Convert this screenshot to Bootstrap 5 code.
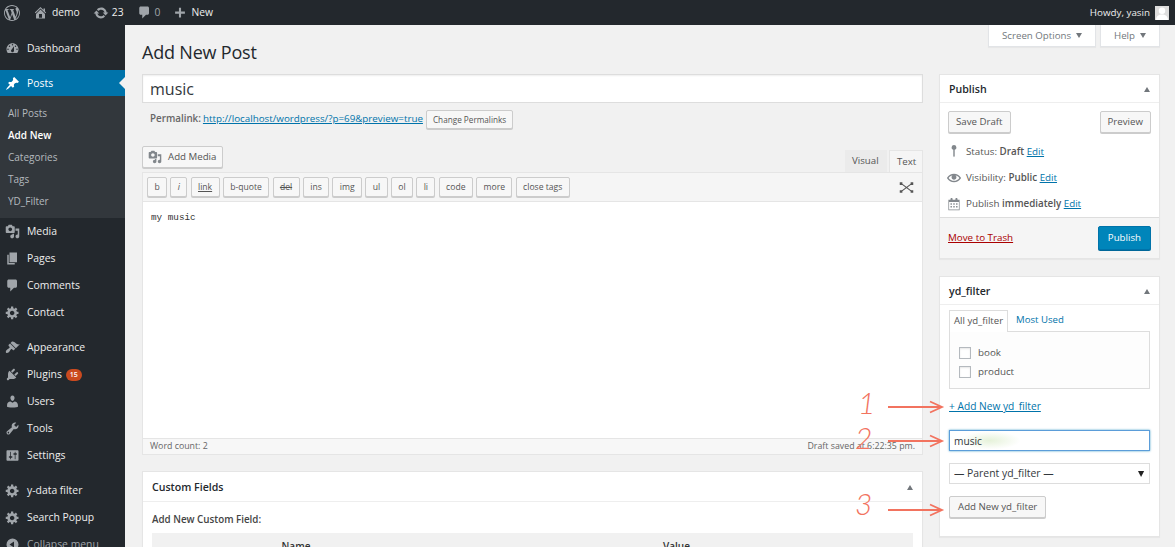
<!DOCTYPE html>
<html lang="en">
<head>
<meta charset="utf-8">
<title>Add New Post</title>
<link rel="stylesheet" href="https://cdn.jsdelivr.net/npm/bootstrap@5.3.0/dist/css/bootstrap.min.css">
<style>
html,body{height:100%;overflow:hidden}
body{background:#f1f1f1;color:#444;font-family:"Open Sans","Noto Sans",sans-serif;font-size:10px;line-height:1.4}
.ic{fill:currentColor;display:block;flex:none}
.stage{height:547px;width:1175px;overflow:hidden}
.adminbar{height:25px;flex:none;background:#23282d;color:#eee;padding:0 6px 0 4px;font-size:10.3px}
.adminbar .ab-item{display:flex;align-items:center;gap:4px;margin-right:13px}
.adminbar .ab-tight{gap:3px}
.adminbar .ic{color:#a0a5aa}
.ab-zero{color:#a0a5aa}
.howdy{font-size:9.8px}
.avatar-box{width:14px;height:14px;background:#ddd;margin-left:5px;overflow:hidden}
.main-row{height:522px;min-height:0}
.side{width:125px;flex:none;background:#23282d;padding-top:10px;font-size:10.4px;height:522px}
.menu-row{height:27px;display:flex;align-items:center;color:#eee;padding-left:5px;gap:7px;text-decoration:none;position:relative}
.menu-row .ic{color:#a0a5aa}
.menu-row.active{background:#0073aa;color:#fff;height:26px}
.menu-row.active .ic{color:#fff}
.menu-row.active::after{content:"";position:absolute;right:0;top:7px;border:6px solid transparent;border-right-color:#f1f1f1;border-left:0}
.menu-gap{height:8px}
.submenu{background:#32373c;padding:6px 0;color:#b4b9be;font-size:10px}
.submenu div{height:22px;line-height:22px;padding-left:8px}
.submenu .on{color:#fff;font-weight:600}
.plug-badge{background:#ca4a1f;color:#fff;border-radius:8px;font-size:7px;font-weight:600;line-height:12px;height:12px;padding:0 4px;margin-left:-3px}
.collapse-row{color:#a0a5aa}
.content-area{padding:0 15px 0 17px;min-width:0}
.head-line{height:49px}
.page-title{font-size:18px;letter-spacing:-.2px;font-weight:400;color:#23282d;margin:15px 0 0;line-height:24px}
.screen-tab{height:22px;background:#fff;border:1px solid #e2e4e7;border-top:0;padding:0 13px;display:flex;align-items:center;gap:5px;color:#72777c;font-size:9.7px;box-shadow:0 1px 1px rgba(0,0,0,.04)}
.tri-down{width:0;height:0;border:3.5px solid transparent;border-top:5px solid #72777c;border-bottom:0}
.tri-up{width:0;height:0;border:3.5px solid transparent;border-bottom:5px solid #72777c;border-top:0}
.left-col{width:781px;flex:none}
.right-col{width:221px;flex:none}
.two-col{gap:16px}
.post-title{height:29px;border:1px solid #ddd;border-radius:0;padding:0 7px;font-size:16px;color:#32373c;box-shadow:inset 0 1px 2px rgba(0,0,0,.07)}
.perma{height:32px;padding-left:8px;font-size:9.8px;gap:2px;color:#666}
.perma a,.pub-link,.box-link{color:#0073aa}
.perma b{font-weight:600}
.wbtn{background:#f7f7f7;border:1px solid #ccc;box-shadow:0 1px 0 #ccc;border-radius:2px;color:#555;font-size:9.7px;padding:0 7px;height:22px;line-height:20px;white-space:nowrap;--bs-btn-hover-bg:#f7f7f7}
.wbtn-sm{font-size:8.2px;height:19px;line-height:17px;padding:0 6px;margin-left:1px}
.editor-top{height:26px;margin-top:11px}
.media-btn{display:flex;align-items:center;gap:6px;padding:0 6px 0 5px}
.media-btn .ic{color:#82878c}
.tab-pane-x{height:22px;line-height:22px;padding:0 7px;font-size:9.7px;color:#555}
.tab-visual{background:#ebebeb;width:42px;margin-right:2px}
.tab-text{background:#f5f5f5;border:1px solid #e5e5e5;border-bottom:0;width:34px}
.tabs-wrap{align-self:flex-end}
.toolbar{height:29px;background:#f5f5f5;border:1px solid #e5e5e5;border-bottom:0;padding:0 4px;gap:3.3px}
.qt{background:#f7f7f7;border:1px solid #ccc;box-shadow:0 1px 0 #ccc;border-radius:2px;color:#555;font-size:8.6px;height:20px;line-height:18px;padding:0 6.4px;white-space:nowrap}
.qt.ital{font-style:italic}
.qt.und{text-decoration:underline}
.qt.lin{text-decoration:line-through}
.dfw{color:#555}
.text-wrap{height:237px;background:#fff;border:1px solid #e5e5e5;border-bottom:0;padding:9px 8px;font-family:"Liberation Mono",monospace;font-size:9.3px;color:#333}
.statusbar{height:17px;background:#f7f7f7;border:1px solid #e5e5e5;padding:0 7px;font-size:8.8px;color:#666}
.wbox{background:#fff;border:1px solid #e5e5e5;border-radius:0;box-shadow:0 1px 1px rgba(0,0,0,.04);--bs-card-border-color:#e5e5e5}
.wbox-head{height:28px;flex:none;padding:1px 9px 0;border-bottom:1px solid #eee;font-size:10.6px;font-weight:600;color:#23282d}
.cf-box{margin-top:16px;height:90px}
.cf-head{height:30px}
.cf-label{font-size:9.8px;font-weight:600;color:#444;padding:10px 9px 0;height:34px;line-height:15px}
.cf-table{margin:0 9px;background:#f1f1f1;height:30px;display:flex;font-size:10px;font-weight:600;color:#333;padding-top:6px}
.cf-table div{text-align:center}
.cf-table .c1{width:288px}
.cf-table .c2{flex:1}
.pub-box{height:185px}
.pub-actions{padding:8px 8px 0;height:36px}
.pub-line{height:27px;padding-left:7px;gap:5px;font-size:9.8px;color:#555}
.pub-line .ic{color:#82878c}
.pub-line b{font-weight:600}
.pub-foot{height:41px;flex:none;background:#f5f5f5;border-top:1px solid #ddd;padding:0 8px;margin-top:auto}
.trash{color:#a00;font-size:9.8px}
.pub-btn{background:#0085ba;border:1px solid #0073aa;box-shadow:0 1px 0 #006799;color:#fff;border-radius:2px;font-size:9.7px;height:24px;line-height:22px;padding:0 9px;--bs-btn-hover-bg:#0085ba}
.yd-box{margin-top:17px;height:261px}
.yd-body{padding:5px 9px 0}
.yd-tabs{height:21px;font-size:9.6px;color:#555}
.yd-tab{padding:0 4px;height:22px;line-height:20px;background:#fff;border:1px solid #ddd;border-bottom:0;position:relative;z-index:1}
.yd-tab2{padding:0 8px;line-height:20px;color:#0073aa}
.yd-list{height:58px;border:1px solid #ddd;background:#fdfdfd;padding:12px 9px 0;font-size:9.8px;color:#555}
.yd-check{height:18.500px;gap:7px}
.cb{appearance:none;width:12px;height:12px;border:1px solid #b4b9be;background:#fff;box-shadow:inset 0 1px 2px rgba(0,0,0,.1);margin:0;flex:none}
.add-link{display:block;margin-top:10px;height:31px;font-size:10.2px;color:#0073aa;line-height:14px}
.yd-input{height:21px;border:1px solid #5b9dd9;border-radius:0;box-shadow:0 0 2px rgba(30,140,190,.8);padding:0 4px;font-size:10.2px;color:#32373c;background:radial-gradient(ellipse 34px 10px at 40px 50%,#e6f2da,#fff 90%)}
.yd-select{height:21px;border:1px solid #ddd;border-radius:0;padding:0 4px;margin-top:12px;font-size:10.4px;color:#32373c;background-image:url("data:image/svg+xml,%3Csvg xmlns='http://www.w3.org/2000/svg' width='8' height='6'%3E%3Cpath d='M0 0h7L3.5 6z' fill='%23222'/%3E%3C/svg%3E");background-position:right 4px center;background-size:7px 6px}
.yd-add{margin-top:12px;display:inline-block;padding:0 8px}
.annot{position:absolute;left:0;top:0;pointer-events:none}
.num{position:absolute;color:#f2735f;font-family:"Lato","Liberation Sans",sans-serif;font-style:italic;font-weight:300;font-size:30px;line-height:30px}
.n1{left:858px;top:387px}
.n2{left:855px;top:422px}
.n3{left:855px;top:488px}
.arrow-svg{position:absolute;left:880px;top:395px}
</style>
</head>
<body class="position-relative">
<svg width="0" height="0" class="position-absolute">
<defs>
<symbol id="i-wp" viewBox="0 0 20 20"><path d="M20 10c0-5.51-4.49-10-10-10C4.48 0 0 4.49 0 10c0 5.52 4.48 10 10 10 5.51 0 10-4.48 10-10zM7.78 15.37L4.37 6.22c.55-.02 1.17-.08 1.17-.08.5-.06.44-1.13-.06-1.11 0 0-1.45.11-2.37.11-.18 0-.37 0-.58-.01C4.12 2.69 6.87 1.11 10 1.11c2.33 0 4.45.87 6.05 2.34-.68-.11-1.65.39-1.65 1.58 0 .74.45 1.36.9 2.1.35.61.55 1.36.55 2.46 0 1.49-1.4 5-1.4 5l-3.03-8.35c.54-.02.82-.17.82-.17.5-.05.44-1.25-.06-1.22 0 0-1.44.12-2.38.12-.87 0-2.33-.12-2.33-.12-.5-.03-.56 1.2-.06 1.22l.92.08 1.26 3.41zM17.41 10c.24-.64.74-1.87.43-4.25.7 1.29 1.05 2.71 1.05 4.25 0 3.29-1.73 6.24-4.4 7.78.97-2.59 1.94-5.2 2.92-7.78zM6.1 18.09C3.12 16.65 1.11 13.53 1.11 10c0-1.3.23-2.48.72-3.59C3.25 10.3 4.67 14.2 6.1 18.09zm4.03-6.63l2.58 6.98c-.86.29-1.76.45-2.71.45-.79 0-1.57-.11-2.29-.33.81-2.38 1.62-4.74 2.42-7.1z"/></symbol>
<symbol id="i-home" viewBox="0 0 20 20"><path d="M16 8.5l1.53 1.53-1.06 1.06L10 4.62l-6.47 6.47-1.06-1.06L10 2.5l4 4v-2h2v4zm-6-2.46l6 5.99V18H4v-5.97zM12 17v-5H8v5h4z"/></symbol>
<symbol id="i-update" viewBox="0 0 20 20"><path d="M10.2 3.28c3.53 0 6.43 2.61 6.92 6h2.08l-3.5 4-3.5-4h2.32c-.45-1.97-2.21-3.45-4.32-3.45-1.45 0-2.73.71-3.54 1.78L4.95 5.66C6.23 4.2 8.11 3.28 10.2 3.28zm-.4 13.44c-3.52 0-6.43-2.61-6.92-6H.8l3.5-4c1.17 1.33 2.33 2.67 3.5 4H5.48c.45 1.97 2.21 3.45 4.32 3.45 1.45 0 2.73-.71 3.54-1.78l1.71 1.95c-1.28 1.46-3.15 2.38-5.25 2.38z"/></symbol>
<symbol id="i-comment" viewBox="0 0 20 20"><path d="M5 2h9c1.1 0 2 .9 2 2v7c0 1.1-.9 2-2 2h-2l-5 5v-5H5c-1.1 0-2-.9-2-2V4c0-1.1.9-2 2-2z"/></symbol>
<symbol id="i-plus" viewBox="0 0 20 20"><path d="M17 8v3h-5.500v5.500h-3V11H3V8h5.500V2.500h3V8h5.500z"/></symbol>
<symbol id="i-dash" viewBox="0 0 20 20"><path d="M3.760 16h12.480c1.100-1.370 1.760-3.110 1.760-5 0-4.420-3.580-8-8-8s-8 3.580-8 8c0 1.890.66 3.630 1.760 5zM10 4c.55 0 1 .45 1 1s-.45 1-1 1-1-.45-1-1 .45-1 1-1zM6 6c.55 0 1 .45 1 1s-.45 1-1 1-1-.45-1-1 .45-1 1-1zm8 0c.55 0 1 .45 1 1s-.45 1-1 1-1-.45-1-1 .45-1 1-1zm-5.370 5.550L12 7v6c0 1.100-.9 2-2 2s-2-.9-2-2c0-.57.24-1.080.63-1.450zM4 10c.55 0 1 .45 1 1s-.45 1-1 1-1-.45-1-1 .45-1 1-1zm12 0c.55 0 1 .45 1 1s-.45 1-1 1-1-.45-1-1 .45-1 1-1z"/></symbol>
<symbol id="i-pin" viewBox="0 0 20 20"><path d="M10.440 3.020l1.820-1.820 6.360 6.350-1.830 1.820c-1.050-.68-2.480-.57-3.410.36l-.75.75c-.92.93-1.040 2.350-.35 3.410l-1.830 1.820-2.410-2.410-2.800 2.790c-.42.42-3.380 2.710-3.800 2.290s1.860-3.390 2.280-3.810l2.790-2.790L4.100 9.360l1.830-1.820c1.050.69 2.480.57 3.400-.36l.75-.75c.93-.92 1.050-2.350.36-3.410z"/></symbol>
<symbol id="i-media" viewBox="0 0 20 20"><path fill-rule="evenodd" d="M13 11V4c0-.55-.45-1-1-1h-1.670L9 1H5L3.670 3H2c-.55 0-1 .45-1 1v7c0 .55.45 1 1 1h10c.55 0 1-.45 1-1zM7 4.500c1.380 0 2.500 1.120 2.500 2.500S8.380 9.500 7 9.500 4.500 8.380 4.500 7 5.620 4.500 7 4.500zM14 6h5v10.500c0 1.380-1.120 2.500-2.500 2.500S14 17.880 14 16.500s1.120-2.500 2.500-2.500c.17 0 .34.02.5.05V9h-3V6zm-4 8.050V13h2v3.500c0 1.380-1.120 2.500-2.500 2.500S7 17.880 7 16.500 8.120 14 9.500 14c.17 0 .34.02.5.05z"/></symbol>
<symbol id="i-page" viewBox="0 0 20 20"><path d="M6 15V2h10v13H6zm-1 1h8v2H3V5h2v11z"/></symbol>
<symbol id="i-gear" viewBox="0 0 20 20"><path fill-rule="evenodd" d="M18 12h-2.180c-.17.7-.44 1.350-.81 1.930l1.540 1.540-2.100 2.100-1.540-1.540c-.58.36-1.230.63-1.910.79V19H8v-2.180c-.68-.16-1.330-.43-1.910-.79l-1.540 1.540-2.120-2.120 1.540-1.540c-.36-.58-.63-1.230-.79-1.910H1V9.030h2.170c.16-.7.44-1.350.8-1.940L2.430 5.550l2.100-2.100 1.540 1.540c.58-.37 1.240-.64 1.930-.81V2h3v2.180c.68.16 1.330.43 1.910.79l1.540-1.540 2.120 2.120-1.540 1.540c.36.59.64 1.240.8 1.940H18V12zm-8.500 1.500c1.660 0 3-1.340 3-3s-1.340-3-3-3-3 1.340-3 3 1.340 3 3 3z"/></symbol>
<symbol id="i-brush" viewBox="0 0 20 20"><path d="M14.480 11.060L7.410 3.990l1.500-1.500c.5-.56 2.300-.47 3.510.32 1.210.8 1.430 1.280 2.910 2.100 1.180.64 2.450 1.260 4.450.85zm-.71.71L6.700 4.700 4.930 6.470c-.39.39-.39 1.020 0 1.410l1.060 1.060c.39.39.39 1.030 0 1.420-.6.6-1.430 1.150-2.210 1.700-.79.570-1.550 1.150-2.180 1.850-.35.4-.85 2.300-.1 3.050.75.75 2.550.2 3-.15.7-.6 1.250-1.400 1.800-2.200.55-.8 1.100-1.600 1.700-2.200.39-.39 1.020-.39 1.410 0l1.060 1.060c.39.39 1.020.39 1.410 0z"/></symbol>
<symbol id="i-plug" viewBox="0 0 20 20"><path d="M13.110 4.360L9.870 7.600 8 5.730l3.240-3.240c.35-.34 1.050-.2 1.560.32.52.51.66 1.210.31 1.550zm-8 1.770l.91-1.120 9.010 9.010-1.190.84c-.71.71-2.630 1.160-3.820 1.160H6.140L4.900 17.260c-.59.59-1.540.59-2.120 0-.59-.58-.59-1.530 0-2.120l1.240-1.240v-3.880c0-1.130.4-3.190 1.090-3.890zm7.260 3.970l3.240-3.240c.34-.35 1.040-.21 1.550.31.52.51.66 1.210.31 1.550l-3.240 3.250z"/></symbol>
<symbol id="i-user" viewBox="0 0 20 20"><path d="M10 9.250c-2.270 0-2.730-3.440-2.730-3.440C7 4.020 7.820 2 9.970 2c2.160 0 2.980 2.020 2.710 3.810 0 0-.41 3.440-2.680 3.440zm0 2.570L12.720 10c2.390 0 4.520 2.330 4.520 4.530v2.490s-3.650 1.130-7.240 1.130c-3.650 0-7.240-1.130-7.240-1.130v-2.490c0-2.250 1.940-4.480 4.470-4.480z"/></symbol>
<symbol id="i-tool" viewBox="0 0 20 20"><path fill-rule="evenodd" d="M16.680 9.770c-1.340 1.340-3.300 1.670-4.950.99l-5.410 6.520c-.99.99-2.590.99-3.580 0s-.99-2.590 0-3.570l6.520-5.420c-.68-1.650-.35-3.610.99-4.950 1.280-1.280 3.120-1.620 4.720-1.060l-2.890 2.890 2.820 2.820 2.860-2.870c.53 1.580.18 3.390-1.080 4.650zM3.810 16.210c.4.39 1.040.39 1.430 0 .4-.4.4-1.040 0-1.430-.39-.4-1.030-.4-1.430 0-.39.39-.39 1.030 0 1.430z"/></symbol>
<symbol id="i-sets" viewBox="0 0 20 20"><path fill-rule="evenodd" d="M18 16V4c0-.55-.45-1-1-1H3c-.55 0-1 .45-1 1v12c0 .55.45 1 1 1h14c.55 0 1-.45 1-1zM8 11h1c.55 0 1 .45 1 1s-.45 1-1 1H8v1.500c0 .28-.22.5-.5.5s-.5-.22-.5-.5V13H6c-.55 0-1-.45-1-1s.45-1 1-1h1V5.500c0-.28.22-.5.5-.5s.5.22.5.5V11zm5-2h-1c-.55 0-1-.45-1-1s.45-1 1-1h1V5.500c0-.28.22-.5.5-.5s.5.22.5.5V7h1c.55 0 1 .45 1 1s-.45 1-1 1h-1v5.500c0 .28-.22.5-.5.5s-.5-.22-.5-.5V9z"/></symbol>
<symbol id="i-collapse" viewBox="0 0 20 20"><path fill-rule="evenodd" d="M10 2a8 8 0 1 0 0 16 8 8 0 0 0 0-16zm2 4v8l-6-4z"/></symbol>
<symbol id="i-eye" viewBox="0 0 20 20"><path fill-rule="evenodd" d="M19.700 9.400C17.700 6 14 3.900 10 3.900S2.300 6 .3 9.400L0 10l.3.6c2 3.400 5.700 5.500 9.700 5.500s7.700-2.100 9.700-5.500l.3-.6-.3-.6zM10 14.100c-3.100 0-6-1.600-7.700-4.100C3.600 8 5.700 6.600 8 6.100c-.9.6-1.500 1.700-1.500 2.900 0 1.900 1.600 3.500 3.500 3.500s3.500-1.600 3.500-3.500c0-1.200-.6-2.300-1.500-2.900 2.300.5 4.400 1.900 5.700 3.900-1.700 2.500-4.600 4.100-7.700 4.100z"/></symbol>
<symbol id="i-cal" viewBox="0 0 20 20"><path fill-rule="evenodd" d="M15 4h3v15H2V4h3V3c0-.41.15-.76.44-1.060.29-.29.65-.44 1.060-.44s.77.15 1.060.44c.29.3.44.65.44 1.060v1h4V3c0-.41.15-.76.44-1.060.29-.29.65-.44 1.060-.44s.77.15 1.060.44c.29.3.44.65.44 1.060v1zM3 18h14V7H3v11zm2-9h2v2H5V9zm4 0h2v2H9V9zm4 0h2v2h-2V9zm-8 4h2v2H5v-2zm4 0h2v2H9v-2zm4 0h2v2h-2v-2z"/></symbol>
<symbol id="i-mark" viewBox="0 0 20 20"><path d="M10 1.500a3.500 3.500 0 0 0-1 6.850V17l1 2 1-2V8.350A3.500 3.500 0 0 0 10 1.500z"/></symbol>
<symbol id="i-full" viewBox="0 0 20 20"><path d="M1 3h3.500v3.500H1zM15.500 3H19v3.500h-3.500zM1 13.500h3.500V17H1zM15.500 13.500H19V17h-3.500z"/><path d="M4 5.500 16 14.500M16 5.500 4 14.500" stroke="currentColor" stroke-width="1.500"/></symbol>
</defs>
</svg>
<div class="stage d-flex flex-column position-relative">
  <header class="adminbar d-flex align-items-center justify-content-between">
    <div class="d-flex align-items-center">
      <div class="ab-item"><svg class="ic" width="16" height="16"><use href="#i-wp"/></svg></div>
      <div class="ab-item"><svg class="ic" width="15" height="15"><use href="#i-home"/></svg><span>demo</span></div>
      <div class="ab-item ab-tight"><svg class="ic" width="16" height="16"><use href="#i-update"/></svg><span>23</span></div>
      <div class="ab-item ab-tight"><svg class="ic" width="15" height="15"><use href="#i-comment"/></svg><span class="ab-zero">0</span></div>
      <div class="ab-item"><svg class="ic" width="14" height="14"><use href="#i-plus"/></svg><span>New</span></div>
    </div>
    <div class="d-flex align-items-center"><span class="howdy">Howdy, yasin</span>
      <div class="avatar-box"><svg width="14" height="14" viewBox="0 0 13 13" class="d-block"><circle cx="6.500" cy="4.500" r="3" fill="#fff"/><path d="M1 13c0-3.500 2.500-5 5.500-5s5.500 1.500 5.500 5z" fill="#fff"/></svg></div>
    </div>
  </header>
  <div class="d-flex main-row">
    <nav class="side">
      <a class="menu-row"><svg class="ic" width="15" height="15"><use href="#i-dash"/></svg>Dashboard</a>
      <div class="menu-gap"></div>
      <a class="menu-row active"><svg class="ic" width="15" height="15"><use href="#i-pin"/></svg>Posts</a>
      <div class="submenu"><div>All Posts</div><div class="on">Add New</div><div>Categories</div><div>Tags</div><div>YD_Filter</div></div>
      <a class="menu-row"><svg class="ic" width="15" height="15"><use href="#i-media"/></svg>Media</a>
      <a class="menu-row"><svg class="ic" width="15" height="15"><use href="#i-page"/></svg>Pages</a>
      <a class="menu-row"><svg class="ic" width="15" height="15"><use href="#i-comment"/></svg>Comments</a>
      <a class="menu-row"><svg class="ic" width="15" height="15"><use href="#i-gear"/></svg>Contact</a>
      <div class="menu-gap"></div>
      <a class="menu-row"><svg class="ic" width="15" height="15"><use href="#i-brush"/></svg>Appearance</a>
      <a class="menu-row"><svg class="ic" width="15" height="15"><use href="#i-plug"/></svg>Plugins<span class="plug-badge">15</span></a>
      <a class="menu-row"><svg class="ic" width="15" height="15"><use href="#i-user"/></svg>Users</a>
      <a class="menu-row"><svg class="ic" width="15" height="15"><use href="#i-tool"/></svg>Tools</a>
      <a class="menu-row"><svg class="ic" width="15" height="15"><use href="#i-sets"/></svg>Settings</a>
      <div class="menu-gap"></div>
      <a class="menu-row"><svg class="ic" width="15" height="15"><use href="#i-gear"/></svg>y-data filter</a>
      <a class="menu-row"><svg class="ic" width="15" height="15"><use href="#i-gear"/></svg>Search Popup</a>
      <a class="menu-row collapse-row"><svg class="ic" width="15" height="15"><use href="#i-collapse"/></svg>Collapse menu</a>
    </nav>
    <main class="content-area flex-grow-1">
      <div class="head-line d-flex justify-content-between align-items-start">
        <h1 class="page-title">Add New Post</h1>
        <div class="d-flex gap-1">
          <div class="screen-tab">Screen Options <span class="tri-down"></span></div>
          <div class="screen-tab">Help <span class="tri-down"></span></div>
        </div>
      </div>
      <div class="d-flex two-col">
        <div class="left-col">
          <input class="form-control post-title" value="music" aria-label="Title">
          <div class="perma d-flex align-items-center"><b>Permalink:</b><a href="#">http://localhost/wordpress/?p=69&amp;preview=true</a><button class="btn wbtn wbtn-sm">Change Permalinks</button></div>
          <div class="editor-top d-flex justify-content-between">
            <button class="btn wbtn media-btn"><svg class="ic" width="14" height="14"><use href="#i-media"/></svg>Add Media</button>
            <div class="tabs-wrap d-flex"><div class="tab-pane-x tab-visual">Visual</div><div class="tab-pane-x tab-text">Text</div></div>
          </div>
          <div class="toolbar d-flex align-items-center">
            <span class="qt">b</span><span class="qt ital">i</span><span class="qt und">link</span><span class="qt">b-quote</span><span class="qt lin">del</span><span class="qt">ins</span><span class="qt">img</span><span class="qt">ul</span><span class="qt">ol</span><span class="qt">li</span><span class="qt">code</span><span class="qt">more</span><span class="qt">close tags</span>
            <svg class="ic ms-auto me-1 dfw" width="15" height="15"><use href="#i-full"/></svg>
          </div>
          <div class="text-wrap">my music</div>
          <div class="statusbar d-flex justify-content-between align-items-center"><span>Word count: 2</span><span>Draft saved at 6:22:35 pm.</span></div>
          <section class="card wbox cf-box">
            <div class="wbox-head cf-head d-flex justify-content-between align-items-center"><span>Custom Fields</span><span class="tri-up"></span></div>
            <div class="cf-label">Add New Custom Field:</div>
            <div class="cf-table"><div class="c1">Name</div><div class="c2">Value</div></div>
          </section>
        </div>
        <aside class="right-col">
          <section class="card wbox pub-box">
            <div class="wbox-head d-flex justify-content-between align-items-center"><span>Publish</span><span class="tri-up"></span></div>
            <div class="pub-actions d-flex justify-content-between"><button class="btn wbtn">Save Draft</button><button class="btn wbtn">Preview</button></div>
            <div class="pub-line d-flex align-items-center"><svg class="ic" width="14" height="14"><use href="#i-mark"/></svg><span>Status: <b>Draft</b> <a href="#" class="pub-link">Edit</a></span></div>
            <div class="pub-line d-flex align-items-center"><svg class="ic" width="14" height="14"><use href="#i-eye"/></svg><span>Visibility: <b>Public</b> <a href="#" class="pub-link">Edit</a></span></div>
            <div class="pub-line d-flex align-items-center"><svg class="ic" width="14" height="14"><use href="#i-cal"/></svg><span>Publish <b>immediately</b> <a href="#" class="pub-link">Edit</a></span></div>
            <div class="pub-foot d-flex justify-content-between align-items-center"><a href="#" class="trash">Move to Trash</a><button class="btn pub-btn">Publish</button></div>
          </section>
          <section class="card wbox yd-box">
            <div class="wbox-head d-flex justify-content-between align-items-center"><span>yd_filter</span><span class="tri-up"></span></div>
            <div class="yd-body">
              <div class="yd-tabs d-flex"><div class="yd-tab">All yd_filter</div><div class="yd-tab2">Most Used</div></div>
              <div class="yd-list">
                <label class="yd-check d-flex align-items-center"><input type="checkbox" class="cb">book</label>
                <label class="yd-check d-flex align-items-center"><input type="checkbox" class="cb">product</label>
              </div>
              <a href="#" class="add-link">+ Add New yd_filter</a>
              <input class="form-control yd-input" value="music" aria-label="New term">
              <select class="form-select yd-select" aria-label="Parent"><option>— Parent yd_filter —</option></select>
              <button class="btn wbtn yd-add">Add New yd_filter</button>
            </div>
          </section>
        </aside>
      </div>
    </main>
  </div>
  <div class="annot">
    <span class="num n1">1</span><span class="num n2">2</span><span class="num n3">3</span>
    <svg class="arrow-svg" width="66" height="125" viewBox="0 0 66 125" fill="none" stroke="#f2735f" stroke-width="1.800">
      <path d="M8 12H60M50 6.500 62 12 50 17.500"/>
      <path d="M8 46H60M50 40.500 62 46 50 51.500"/>
      <path d="M8 115H60M50 109.500 62 115 50 120.500"/>
    </svg>
  </div>
</div>
</body>
</html>
